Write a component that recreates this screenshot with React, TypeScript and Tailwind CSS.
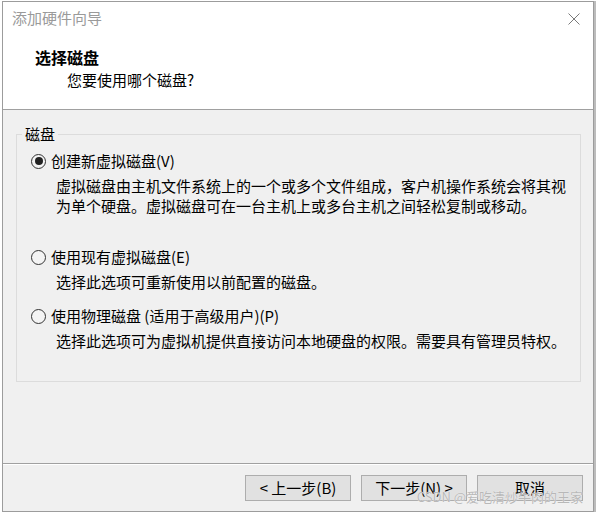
import React from "react";

const font = { fontFamily: '"Noto Sans CJK SC", "Noto Sans", sans-serif' };

function Radio({ checked }: { checked?: boolean }) {
  return (
    <span className="flex h-[15px] w-[15px] shrink-0 items-center justify-center rounded-full border border-[#333333] bg-[#f4f4f4]">
      {checked ? <span className="h-[8px] w-[8px] rounded-full bg-[#222222]" /> : null}
    </span>
  );
}

function Option({
  checked,
  label,
  lines,
  mt,
}: {
  checked?: boolean;
  label: string;
  lines: string[];
  mt: string;
}) {
  return (
    <div className={mt}>
      <div className="flex h-[20px] items-center gap-[5px] pl-[14px] leading-[20px]">
        <Radio checked={checked} />
        <span className="whitespace-nowrap">{label}</span>
      </div>
      <div className="pl-[39px]">
        {lines.map((l, i) => (
          <div key={i} className={`whitespace-nowrap leading-[20px] ${i === 0 ? "mt-[5px]" : ""}`}>
            {l}
          </div>
        ))}
      </div>
    </div>
  );
}

export default function App() {
  return (
    <div className="relative h-[513px] w-[597px] overflow-hidden bg-white text-[15px] text-black" style={font}>
      <div className="flex pt-[1px]">
        <div className="w-[2px]" />
        {/* Window */}
        <div className="flex h-[511px] w-[592px] flex-col border border-[#9c9c9c] bg-[#f0f0f0]">
          {/* Header */}
          <div className="h-[107px] shrink-0 bg-white">
            <div className="flex items-center justify-between pl-[9px] pr-[13px] pt-[6px]">
              <span className="leading-[20px] text-[#9a9a9a]">添加硬件向导</span>
              <svg width="12" height="12" viewBox="0 0 12 12" className="mt-[2px]">
                <path d="M0.5 0.5 L11.5 11.5 M11.5 0.5 L0.5 11.5" stroke="#7a7a7a" strokeWidth="1" fill="none" />
              </svg>
            </div>
            <div className="mt-[19px] pl-[32px] text-[16px] font-bold leading-[20px]">选择磁盘</div>
            <div className="mt-[3px] pl-[64px] leading-[20px]">您要使用哪个磁盘?</div>
          </div>
          <div className="h-[1px] shrink-0 bg-[#a0a0a0]" />
          {/* Body */}
          <div className="h-[353px] shrink-0 pt-[24px]">
            <div className="relative ml-[13px] h-[248px] w-[565px] border border-[#dcdcdc] pt-[16px]">
              <span className="absolute left-[5px] top-[-11px] bg-[#f0f0f0] px-[3px] leading-[20px]">磁盘</span>
              <Option
                checked
                mt="mt-0"
                label="创建新虚拟磁盘(V)"
                lines={[
                  "虚拟磁盘由主机文件系统上的一个或多个文件组成，客户机操作系统会将其视",
                  "为单个硬盘。虚拟磁盘可在一台主机上或多台主机之间轻松复制或移动。",
                ]}
              />
              <Option
                mt="mt-[31px]"
                label="使用现有虚拟磁盘(E)"
                lines={["选择此选项可重新使用以前配置的磁盘。"]}
              />
              <Option
                mt="mt-[14px]"
                label="使用物理磁盘 (适用于高级用户)(P)"
                lines={["选择此选项可为虚拟机提供直接访问本地硬盘的权限。需要具有管理员特权。"]}
              />
            </div>
          </div>
          <div className="h-[1px] shrink-0 bg-[#a0a0a0]" />
          <div className="h-[1px] shrink-0 bg-white" />
          {/* Buttons */}
          <div className="flex flex-1 items-start justify-end gap-[10px] pr-[10px] pt-[10px]">
            {["< 上一步(B)", "下一步(N) >", "取消"].map((t) => (
              <button
                key={t}
                className="flex h-[26px] w-[106px] items-center justify-center border border-[#adadad] bg-[#e1e1e1] leading-[20px]"
              >
                {t}
              </button>
            ))}
          </div>
        </div>
        <div className="h-[511px] w-[2px] bg-[#bcbcbc]" />
      </div>
      {/* Watermark */}
      <div
        className="absolute right-[14px] top-[488px] whitespace-nowrap text-[13px] leading-[18px] text-[#b8b8b8]"
        style={{ textShadow: "0 0 1px #ffffff" }}
      >
        CSDN @爱吃清炒牛肉的王家
      </div>
    </div>
  );
}
